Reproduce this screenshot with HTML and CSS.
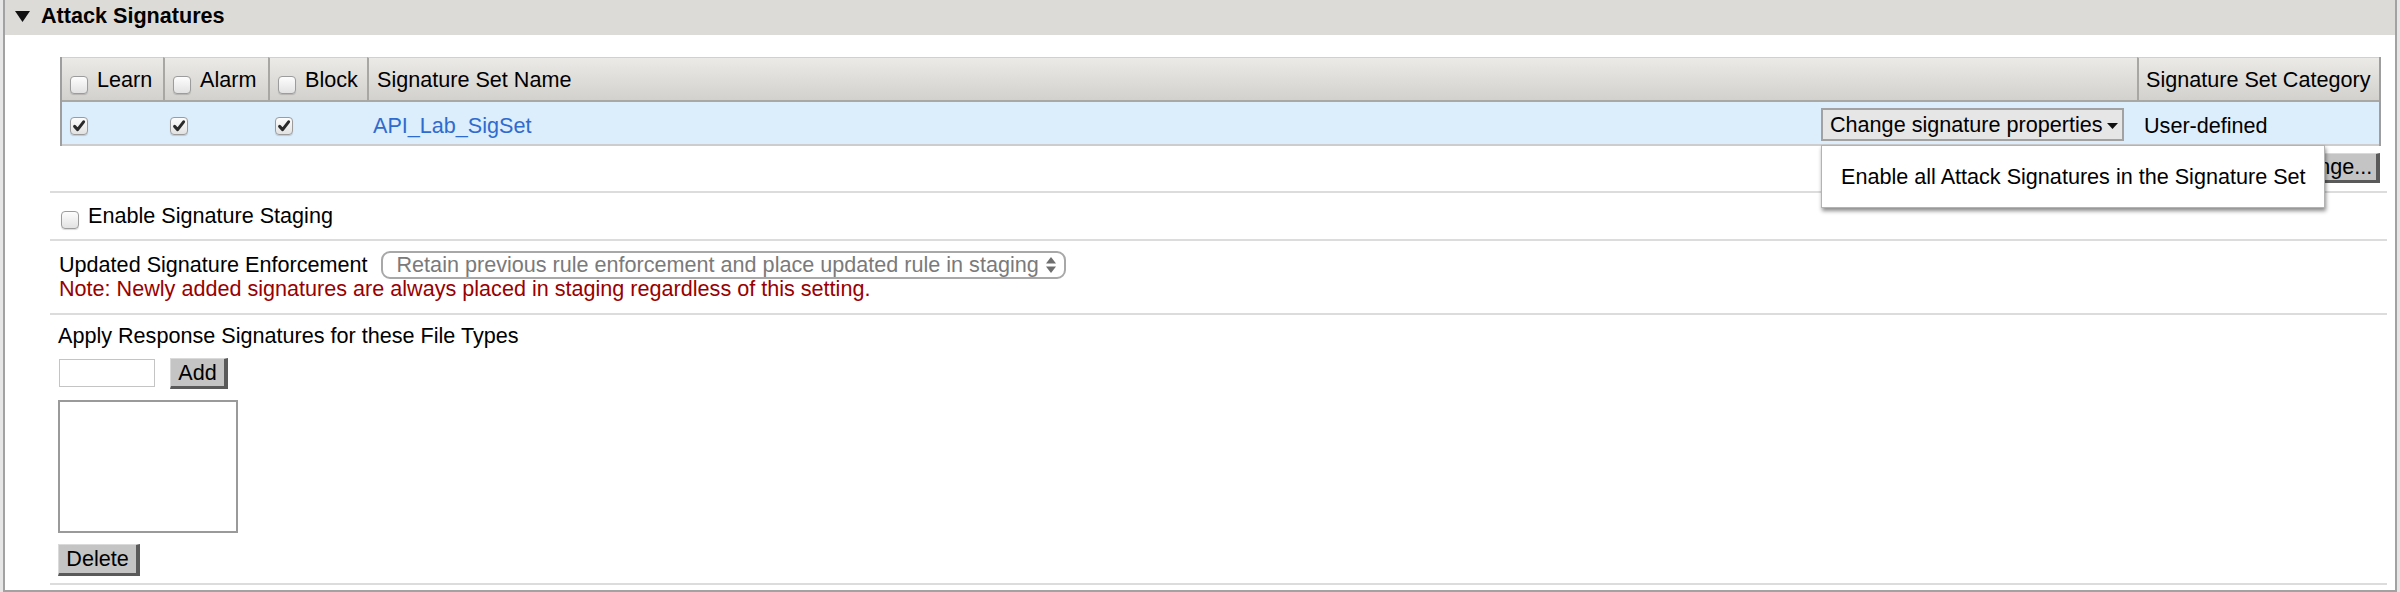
FILE: index.html
```html
<!DOCTYPE html>
<html>
<head>
<meta charset="utf-8">
<title>Attack Signatures</title>
<link rel="stylesheet" href="styles.css">
</head>
<body>
<div class="panel">
  <div class="panel-head">
    <svg class="tri" width="15" height="11" viewBox="0 0 15 11"><polygon points="0,0 15,0 7.5,11" fill="#111"/></svg>
    <span class="title">Attack Signatures</span>
  </div>
  <div class="panel-body">
    <div class="section sec-sets">
      <table class="sets">
        <thead>
          <tr>
            <th class="c-learn"><div class="th-in"><span class="cb hcb"></span>Learn</div></th>
            <th class="c-alarm"><div class="th-in"><span class="cb hcb"></span>Alarm</div></th>
            <th class="c-block"><div class="th-in"><span class="cb hcb"></span>Block</div></th>
            <th class="c-name"><div class="th-in">Signature Set Name</div></th>
            <th class="c-cat"><div class="th-in">Signature Set Category</div></th>
          </tr>
        </thead>
        <tbody>
          <tr>
            <td class="td-cb first"><span class="cb rcb"><svg width="16" height="16" viewBox="0 0 16 16"><path d="M3.6 8.4 L6.6 11.6 L12.6 3.8" fill="none" stroke="#2a2a2a" stroke-width="3" stroke-linecap="round" stroke-linejoin="round"/></svg></span></td>
            <td class="td-cb"><span class="cb rcb"><svg width="16" height="16" viewBox="0 0 16 16"><path d="M3.6 8.4 L6.6 11.6 L12.6 3.8" fill="none" stroke="#2a2a2a" stroke-width="3" stroke-linecap="round" stroke-linejoin="round"/></svg></span></td>
            <td class="td-cb"><span class="cb rcb"><svg width="16" height="16" viewBox="0 0 16 16"><path d="M3.6 8.4 L6.6 11.6 L12.6 3.8" fill="none" stroke="#2a2a2a" stroke-width="3" stroke-linecap="round" stroke-linejoin="round"/></svg></span></td>
            <td class="td-name">
              <div class="name-in">
                <a class="set-link" href="#">API_Lab_SigSet</a>
                <div class="dd">
                  <button class="dd-btn">Change signature properties<svg class="caret" width="11" height="6" viewBox="0 0 11 6"><polygon points="0,0 11,0 5.5,6" fill="#111"/></svg></button>
                  <div class="menu">Enable all Attack Signatures in the Signature Set</div>
                </div>
              </div>
            </td>
            <td class="td-cat">User-defined</td>
          </tr>
        </tbody>
      </table>
      <div class="toolbar"><button class="btn btn-change">Change...</button></div>
    </div>

    <div class="section sec-staging">
      <span class="cb scb"></span>
      <span>Enable Signature Staging</span>
    </div>

    <div class="section sec-enf">
      <div class="enf-row">
        <span>Updated Signature Enforcement</span>
        <div class="fake-select">
          <span>Retain previous rule enforcement and place updated rule in staging</span>
          <svg class="updown" width="10" height="16" viewBox="0 0 10 16"><polygon points="5,0 10,6.5 0,6.5" fill="#6e6e6e"/><polygon points="0,9.5 10,9.5 5,16" fill="#6e6e6e"/></svg>
        </div>
      </div>
      <div class="note">Note: Newly added signatures are always placed in staging regardless of this setting.</div>
    </div>

    <div class="section sec-files">
      <div class="files-title">Apply Response Signatures for these File Types</div>
      <div class="add-row">
        <input class="ft-input" type="text">
        <button class="btn btn-add">Add</button>
      </div>
      <textarea class="ft-list"></textarea>
      <button class="btn btn-del">Delete</button>
    </div>
  </div>
</div>
</body>
</html>
```

FILE: styles.css
```css
* { box-sizing: border-box; }

body {
  margin: 0;
  background: #e6e6e6;
  font-family: "Liberation Sans", Arial, Helvetica, sans-serif;
  font-size: 21.6px;
  color: #000;
}

.panel {
  margin: 0 3px;
  border: 2px solid #a2a2a2;
  border-top: none;
  background: #fff;
}

.panel-head {
  height: 35px;
  background: #dddbd7;
  display: flex;
  align-items: center;
  padding: 0 0 4px 10px;
  font-weight: bold;
  font-size: 21.6px;
}

.tri { margin-right: 11px; margin-top: 2px; }

.panel-body {
  padding: 22px 8px 5px 45px;
}

.section {
  border-bottom: 2px solid #dcdcdc;
}

/* ---------- signature sets table ---------- */
.sec-sets { padding: 0 6px 0 10px; }

.sets {
  width: 100%;
  table-layout: fixed;
  border-collapse: separate;
  border-spacing: 0;
  border-left: 2px solid #9e9e9e;
  border-right: 2px solid #9e9e9e;
}

.sets th {
  height: 45px;
  padding: 1px 0 0 8px;
  text-align: left;
  font-weight: normal;
  background: linear-gradient(#eceae7, #d3d1cd);
  border-top: 1px solid #d0d0d0;
  border-bottom: 2px solid #aaa8a5;
  border-left: 2px solid #a9a7a4;
  vertical-align: middle;
}
.sets th.c-learn { border-left: none; width: 101px; }
.sets th.c-alarm { width: 105px; }
.sets th.c-block { width: 99px; }
.sets th.c-cat { width: 242px; padding-left: 7px; }

.th-in {
  display: flex;
  align-items: center;
  gap: 9px;
  white-space: nowrap;
}

.sets td {
  height: 44px;
  background: #dcedfb;
  border-bottom: 2px solid #cdcdcd;
  vertical-align: middle;
  padding: 5px 0 0 7px;
}
.sets td.first { padding-left: 8px; }
.sets td.td-name { padding: 5px 13px 0 6px; }
.sets td.td-cat { padding-left: 7px; white-space: nowrap; }

/* checkboxes */
.cb {
  display: inline-flex;
  align-items: center;
  justify-content: center;
  width: 18px;
  height: 18px;
  flex: none;
  border: 1px solid #9c9c9c;
  border-radius: 4px;
  background: linear-gradient(#fdfdfd, #e2e2e2);
  box-shadow: 0 1px 1px rgba(0, 0, 0, 0.15);
}
.hcb { margin-top: 10px; }
.rcb { display: flex; margin-top: 1px; }

.name-in {
  display: flex;
  align-items: center;
  justify-content: space-between;
}

.set-link {
  color: #2f6bcf;
  text-decoration: none;
}

.dd { position: relative; }

.dd-btn {
  display: flex;
  align-items: center;
  width: 303px;
  height: 33px;
  margin-top: -2px;
  padding: 0 0 0 7px;
  border: 2px solid #a2a2a2;
  background: #e6e6e6;
  font-family: inherit;
  font-size: 21.6px;
  color: #000;
  text-align: left;
  white-space: nowrap;
}
.caret { margin-left: 4px; margin-top: 3px; }

.menu {
  position: absolute;
  top: 35px;
  left: 0;
  width: 504px;
  height: 63px;
  z-index: 5;
  display: flex;
  align-items: center;
  padding-left: 19px;
  background: #fff;
  border: 1px solid #b3b3b3;
  box-shadow: 1px 3px 4px rgba(0, 0, 0, 0.45);
  white-space: nowrap;
}

.toolbar {
  display: flex;
  justify-content: flex-end;
  margin: 7px 1px 8px 0;
}

/* buttons */
.btn {
  font-family: inherit;
  font-size: 21.6px;
  color: #000;
  background: #c4c4c4;
  border-style: solid;
  border-width: 1px 4px 3px 1px;
  border-color: #dadada #5a5a5a #5a5a5a #dadada;
  padding: 0;
}
.btn-change { width: 106px; height: 30px; }
.btn-add { width: 58px; height: 31px; margin-left: 15px; }
.btn-del { display: block; width: 82px; height: 32px; margin-top: 11px; }

/* ---------- staging ---------- */
.sec-staging {
  height: 48px;
  display: flex;
  align-items: center;
  gap: 9px;
  padding-left: 11px;
}
.scb { margin-top: 7px; }

/* ---------- enforcement ---------- */
.sec-enf { padding: 10px 0 15px 9px; }

.enf-row {
  height: 28px;
  display: flex;
  align-items: center;
  white-space: nowrap;
}

.fake-select {
  margin-left: 13px;
  width: 685px;
  height: 28px;
  border: 2px solid #a8a8a8;
  border-radius: 9px;
  display: flex;
  align-items: center;
  justify-content: space-between;
  padding: 0 8px 0 14px;
  color: #7a7a7a;
  white-space: nowrap;
}

.note {
  line-height: 19px;
  color: #990000;
  white-space: nowrap;
}

/* ---------- file types ---------- */
.sec-files { padding: 9px 0 7px 8px; }

.files-title { line-height: 24px; }

.add-row {
  margin-top: 10px;
  height: 31px;
  display: flex;
  align-items: flex-start;
}

.ft-input {
  margin: 1px 0 0 1px;
  width: 96px;
  height: 28px;
  border: 1px solid #c4c4c4;
  padding: 0 4px;
  font-family: inherit;
  font-size: 18px;
}

.ft-list {
  display: block;
  margin-top: 11px;
  width: 180px;
  height: 133px;
  border: 2px solid #9a9a9a;
  resize: none;
  font-family: inherit;
}
```
